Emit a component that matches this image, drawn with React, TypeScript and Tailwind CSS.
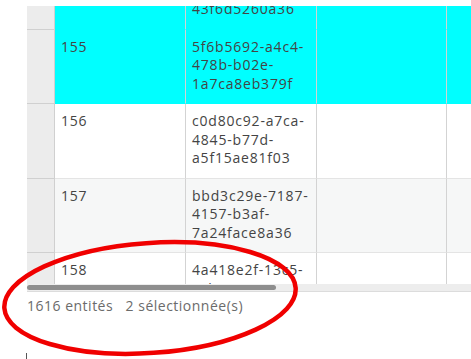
interface Row {
  id: number;
  lines: string[];
  selected: boolean;
  striped: boolean;
}

const rows: Row[] = [
  { id: 154, lines: ['8b2e41c7-9d0a-', '4e3b-a1f5-', '43f6d5260a36'], selected: true, striped: false },
  { id: 155, lines: ['5f6b5692-a4c4-', '478b-b02e-', '1a7ca8eb379f'], selected: true, striped: true },
  { id: 156, lines: ['c0d80c92-a7ca-', '4845-b77d-', 'a5f15ae81f03'], selected: false, striped: false },
  { id: 157, lines: ['bbd3c29e-7187-', '4157-b3af-', '7a24face8a36'], selected: false, striped: true },
  { id: 158, lines: ['4a418e2f-13c5-', '4cb0-8005-', '3e9d2a7f10bc'], selected: false, striped: false },
];

function TableRow({ row }: { row: Row }) {
  // selected rows are cyan, otherwise zebra striping
  const bg = row.selected ? 'bg-[#00ffff]' : row.striped ? 'bg-[#f6f7f7]' : 'bg-white';
  const line = row.selected ? 'border-[#00ffff]' : 'border-[#e4e4e4]';
  const cell = `shrink-0 border-b border-r border-r-[#d3d3d3] ${line} pl-[6px] pr-[6px] pt-[8px] pb-[10px]`;

  return (
    <div className="flex">
      <div className="w-[28px] shrink-0 bg-[#ececec] border-b border-r border-[#d0d0d0]" />
      <div className={`flex ${bg}`}>
        <div className={`${cell} w-[131px]`}>{row.id}</div>
        <div className={`${cell} w-[131px]`}>
          {row.lines.map((l, i) => (
            <div key={i}>{l}</div>
          ))}
        </div>
        <div className={`${cell} w-[130px]`}>
          <div className="invisible">.</div>
        </div>
        <div className={`${cell} w-[130px]`} />
      </div>
    </div>
  );
}

export default function App() {
  return (
    <div className="relative w-[471px] h-[359px] overflow-hidden bg-white font-['Open_Sans',sans-serif]">
      <div className="pl-[27px] pt-[6px]">
        {/* table body, scrolled part way down */}
        <div className="h-[278px] overflow-hidden">
          <div className="-mt-[51px] text-[14px] leading-[18.5px] tracking-[0.8px] text-[#444]">
            {rows.map((r) => (
              <TableRow key={r.id} row={r} />
            ))}
          </div>
        </div>
        {/* horizontal scrollbar */}
        <div className="h-[8px] bg-[#ededed] border-b border-[#dcdcdc] pt-px">
          <div className="w-[249px] h-[5px] rounded-full bg-[#8e8e8e]" />
        </div>
        <div className="pt-[4px] text-[14px] leading-[20px] tracking-[0.5px] text-[#6b6b6b] whitespace-pre">
          1616 entités   2 sélectionnée(s)
        </div>
        <div className="-ml-px mt-[37px] w-px h-[8px] bg-[#555]" />
      </div>

      <svg className="absolute left-0 top-0 pointer-events-none" width="471" height="359">
        <ellipse
          cx="150"
          cy="298"
          rx="146"
          ry="55"
          fill="none"
          stroke="#f00000"
          strokeWidth="4.5"
          transform="rotate(-4 150 298)"
        />
      </svg>
    </div>
  );
}
